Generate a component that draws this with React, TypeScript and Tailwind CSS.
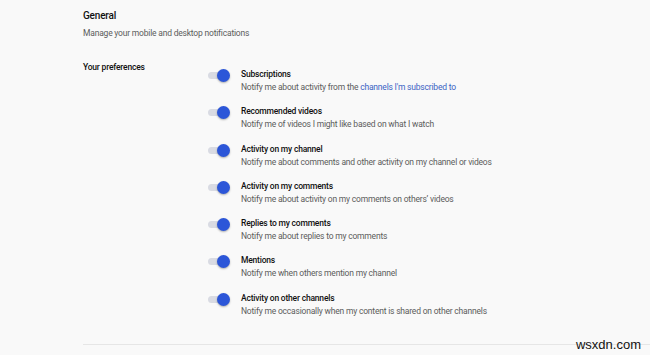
import React from 'react';

interface Pref {
  title: string;
  desc: React.ReactNode;
}

const prefs: Pref[] = [
  {
    title: 'Subscriptions',
    desc: (
      <>
        Notify me about activity from the <span className="text-[#3b63c4]">channels I'm subscribed to</span>
      </>
    ),
  },
  { title: 'Recommended videos', desc: 'Notify me of videos I might like based on what I watch' },
  { title: 'Activity on my channel', desc: 'Notify me about comments and other activity on my channel or videos' },
  { title: 'Activity on my comments', desc: 'Notify me about activity on my comments on others\u2019 videos' },
  { title: 'Replies to my comments', desc: 'Notify me about replies to my comments' },
  { title: 'Mentions', desc: 'Notify me when others mention my channel' },
  { title: 'Activity on other channels', desc: 'Notify me occasionally when my content is shared on other channels' },
];

const Toggle: React.FC = () => (
  <div className="relative w-[23px] h-[13px] shrink-0 mt-[1px]">
    {/* track */}
    <div className="absolute left-0 top-[3px] w-[20px] h-[7px] rounded-full bg-[#d9dbe3]"></div>
    {/* knob */}
    <div className="absolute left-[9px] top-0 w-[13px] h-[13px] rounded-full bg-[#2c56d8] shadow-[0_1px_2px_rgba(0,0,0,0.3)]"></div>
  </div>
);

export default function App() {
  return (
    <div className="relative w-[650px] h-[355px] overflow-hidden bg-[#f9f9f9] font-['Roboto',sans-serif] text-[#1a1a1a]">
      <div className="pl-[83px] pt-[9px]">
        <h2 className="text-[10px] leading-[13px] font-medium tracking-[-0.2px] text-[#111]">General</h2>
        <p className="mt-[6px] text-[8.5px] leading-[11px] tracking-[-0.2px] text-[#5c5c5c]">Manage your mobile and desktop notifications</p>

        <div className="flex mt-[23px]">
          <div className="w-[125px] shrink-0 text-[8.5px] leading-[11px] font-medium tracking-[-0.2px] text-[#111]">Your preferences</div>
          <div className="flex flex-col gap-[11.3px] mt-[6px]">
            {prefs.map((p) => (
              <div key={p.title} className="flex items-start gap-[10px]">
                <Toggle />
                <div className="tracking-[-0.2px]">
                  <div className="text-[8.5px] leading-[13px] font-medium text-[#111]">{p.title}</div>
                  <div className="text-[8.5px] leading-[13px] text-[#5c5c5c]">{p.desc}</div>
                </div>
              </div>
            ))}
          </div>
        </div>

        <div className="mt-[26px] h-px bg-[#e6e6e6]"></div>
      </div>

      {/* watermark */}
      <div className="absolute right-[9px] bottom-[3px] text-[13px] leading-[15px] text-[#111] font-['Liberation_Sans',sans-serif]">wsxdn.com</div>
    </div>
  );
}
